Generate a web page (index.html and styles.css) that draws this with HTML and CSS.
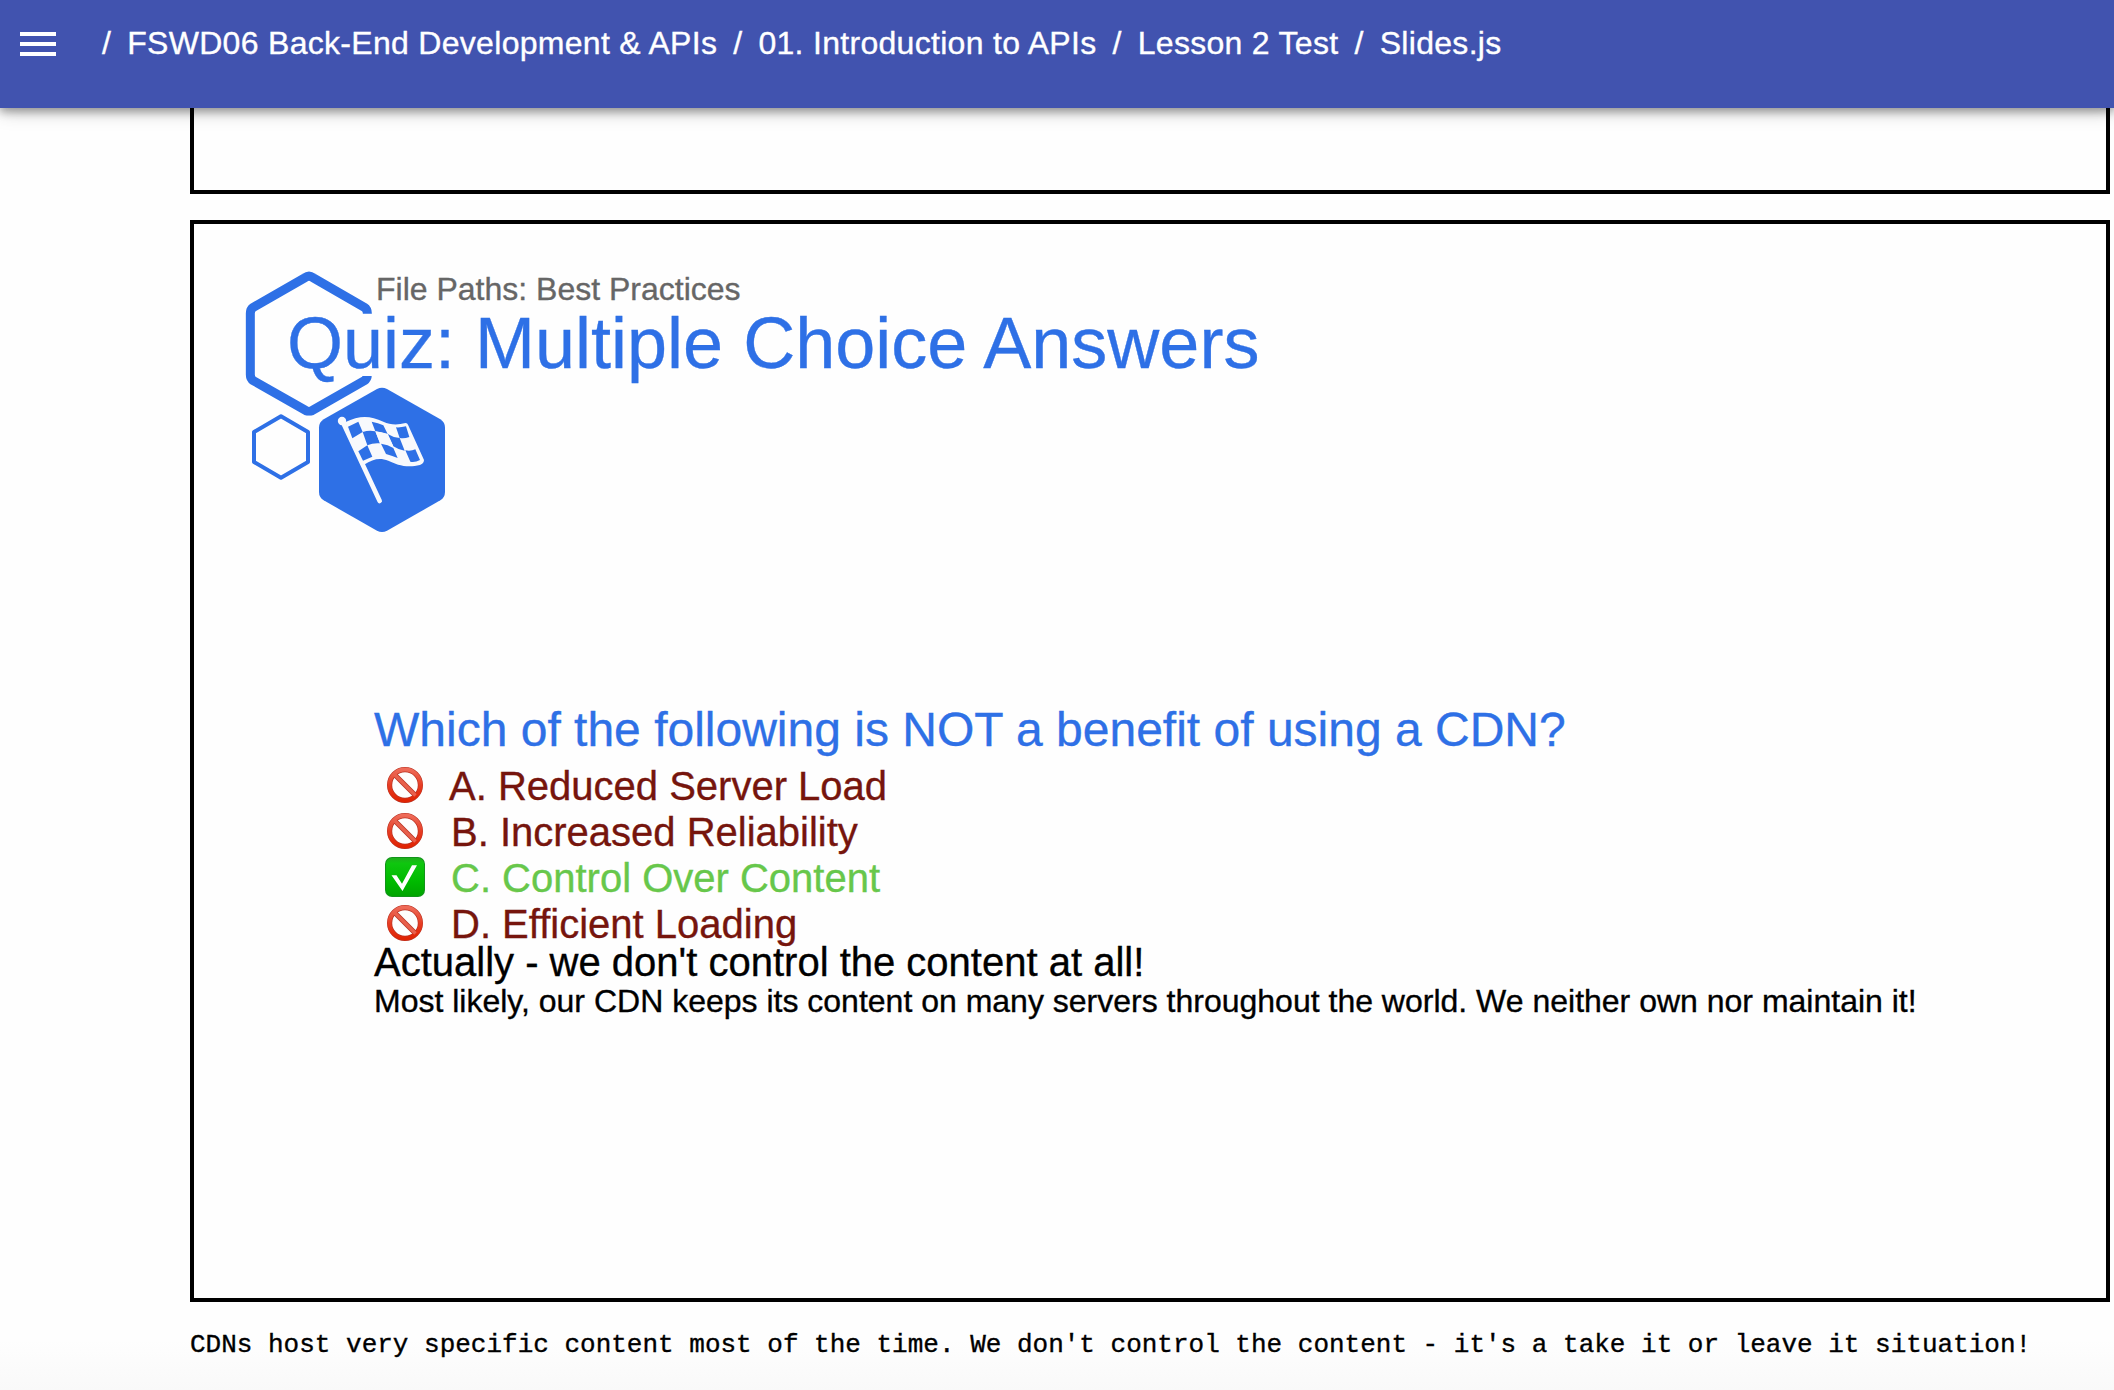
FILE: index.html
```
<!DOCTYPE html>
<html lang="en">
<head>
<meta charset="utf-8">
<title>Slides.js</title>
<link rel="stylesheet" href="styles.css">
</head>
<body>
<svg class="defs" width="0" height="0" aria-hidden="true">
  <defs>
    <linearGradient id="red" x1="0" y1="0" x2="0" y2="1"><stop offset="0" stop-color="#ee6a58"/><stop offset=".55" stop-color="#e63a20"/><stop offset="1" stop-color="#e02404"/></linearGradient>
    <linearGradient id="green" x1="0" y1="0" x2="0" y2="1"><stop offset="0" stop-color="#1fae1c"/><stop offset=".14" stop-color="#0fc60f"/><stop offset=".6" stop-color="#00bb00"/><stop offset="1" stop-color="#00a400"/></linearGradient>
    <symbol id="no" viewBox="0 0 40 40"><circle cx="20" cy="20" r="15.4" fill="none" stroke="#b93222" stroke-width="5.2"/><path d="M9.5 9.5L30.5 30.5" stroke="#b93222" stroke-width="5"/><circle cx="20" cy="20" r="15.5" fill="none" stroke="url(#red)" stroke-width="4"/><path d="M9.5 9.5L30.5 30.5" stroke="#e9604c" stroke-width="3.4"/></symbol>
    <symbol id="yes" viewBox="0 0 40 40"><rect width="40" height="40" rx="7" fill="#12941a"/><rect x="1" y="1" width="38" height="38" rx="6" fill="url(#green)"/><path d="M6.5 18.3L11.5 18.3L17 26.8L27 8.3L32 8.3L17.5 34Z" fill="#fff"/></symbol>
  </defs>
</svg>
<header class="topbar">
  <svg class="menu" viewBox="0 0 36 24"><path d="M0 2H36M0 12H36M0 22H36" stroke="#fff" stroke-width="4"/></svg>
  <nav class="crumbs">
    <span>/</span><span class="crumb">FSWD06 Back-End Development &amp; APIs</span><span>/</span><span class="crumb">01. Introduction to APIs</span><span>/</span><span class="crumb">Lesson 2 Test</span><span>/</span><span class="crumb">Slides.js</span>
  </nav>
</header>
<main class="deck">
  <section class="slide previous"></section>
  <section class="slide">
    <svg class="emblem" viewBox="0 0 810 900">
      <clipPath id="gap"><path d="M0 0H810V191H370V378H810V497H0Z"/></clipPath>
      <g fill="none" stroke="#2e70e6">
        <path clip-path="url(#gap)" stroke-width="27" d="M225 83Q237 74 249 83L403 172Q412 178 412 190V374Q412 386 403 392L249 480Q237 490 225 480L70 392Q61 386 61 374V190Q61 178 70 172Z"/>
        <path stroke-width="12" stroke-linejoin="round" d="M153 499L234 546V636L153 683L72 636V546Z"/>
      </g>
      <path fill="#2e70e6" d="M441 417Q456 409 471 417L631 508Q645 517 645 533V726Q645 742 631 751L471 842Q456 850 441 842L281 751Q267 742 267 726V533Q267 517 281 508Z"/>
      <circle cx="336" cy="513" r="12.5" fill="#f8f9fc"/>
      <path d="M338 515L449 753" stroke="#f8f9fc" stroke-width="14" stroke-linecap="round"/>
      <path d="M345 517C390 495 420 497 460 515C480 524 500 526 527 519Q532 519 534 524L582 630Q582 640 570 645C530 655 500 644 475 632C450 622 430 626 402 644Z" fill="#f8f9fc"/>
      <g fill="#2e70e6">
        <path d="M354 530L385 515L398 546L367 565Z"/>
        <path d="M425 515Q445 518 460 526L473 552Q455 546 436 544Z"/>
        <path d="M498 532Q512 533 528 529L538 561Q522 567 509 564Z"/>
        <path d="M398 546Q417 540 436 544L450 580Q430 578 412 586Z"/>
        <path d="M473 552Q490 563 509 564L524 602Q506 600 490 589Z"/>
        <path d="M450 580L436 544L473 552L490 589Z" fill="#f8f9fc"/>
        <path d="M385 604L412 586L427 620L399 632Z"/>
        <path d="M453 581Q474 584 490 594L503 624Q488 618 468 612Z"/>
        <path d="M526 601Q543 604 556 598L570 630Q555 638 541 635Z"/>
      </g>
    </svg>
    <div class="heading">
      <p class="topic">File Paths: Best Practices</p>
      <h1>Quiz: Multiple Choice Answers</h1>
    </div>
    <div class="quiz">
      <h2>Which of the following is NOT a benefit of using a CDN?</h2>
      <ul class="answers">
        <li><svg><use href="#no"/></svg><span>A. Reduced Server Load</span></li>
        <li><svg><use href="#no"/></svg><span>B. Increased Reliability</span></li>
        <li class="correct"><svg><use href="#yes"/></svg><span>C. Control Over Content</span></li>
        <li><svg><use href="#no"/></svg><span>D. Efficient Loading</span></li>
      </ul>
      <p class="reason">Actually - we don't control the content at all!</p>
      <p class="detail">Most likely, our CDN keeps its content on many servers throughout the world. We neither own nor maintain it!</p>
    </div>
  </section>
  <p class="notes">CDNs host very specific content most of the time. We don't control the content - it's a take it or leave it situation!</p>
</main>
</body>
</html>
```
FILE: styles.css
```
* { box-sizing: border-box; }
body {
  margin: 0;
  height: 1390px;
  overflow: hidden;
  font-family: "Liberation Sans", Arial, sans-serif;
  color: #000;
  background: linear-gradient(#fefefe 1340px, #f9f9f9 1390px);
  -webkit-text-stroke: 0.35px currentColor;
}
h1, h2, p, ul { margin: 0; padding: 0; font-weight: 400; white-space: nowrap; }
.defs { position: absolute; }
.topbar {
  position: relative;
  z-index: 2;
  height: 108px;
  display: flex;
  align-items: flex-start;
  padding: 24px 0 0 20px;
  background: #4153af;
  box-shadow: 0 4px 8px rgba(0,0,0,.28), 0 2px 18px rgba(0,0,0,.28);
  color: #fff;
}
.menu { width: 36px; height: 24px; margin-top: 8px; }
.crumbs {
  display: flex;
  gap: 16px;
  margin: 1px 0 0 46px;
  font-size: 32px;
  line-height: 37px;
  letter-spacing: 0.3px;
  white-space: nowrap;
}
.deck { padding-left: 190px; }
.slide {
  position: relative;
  width: 1920px;
  height: 1082px;
  border: 4px solid #000;
}
.previous { height: 86px; border-top: 0; margin-bottom: 26px; }
.emblem { position: absolute; left: 36px; top: 26px; width: 270px; height: 300px; }
.heading { position: relative; padding-top: 47px; }
.topic { padding-left: 182px; font-size: 32px; line-height: 36px; color: #666; }
h1 { padding-left: 93px; font-size: 72px; line-height: 82px; margin-top: -5px; color: #2e70e6; }
.quiz { padding: 319px 0 0 180px; }
h2 { font-size: 48px; line-height: 54px; color: #2e70e6; }
.answers { list-style: none; padding: 6px 0 0 11px; font-size: 40px; line-height: 46px; color: #76150d; }
.answers li { display: flex; align-items: center; height: 46px; }
.answers svg { width: 40px; height: 40px; margin: -2px 26px 0 0; }
.answers li:first-child svg { margin-right: 24px; }
.answers .correct { color: #67c74b; }
.reason { font-size: 40px; line-height: 38px; margin-top: -4px; }
.detail { font-size: 32px; line-height: 36px; margin-top: 2px; }
.notes { padding-top: 28px; font: 26px/30px "Liberation Mono", "Courier New", monospace; }
```
